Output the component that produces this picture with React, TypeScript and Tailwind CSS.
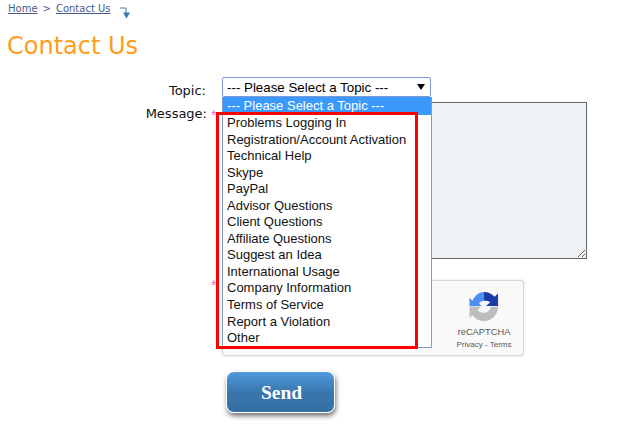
import React from 'react';

const topics = [
  'Problems Logging In',
  'Registration/Account Activation',
  'Technical Help',
  'Skype',
  'PayPal',
  'Advisor Questions',
  'Client Questions',
  'Affiliate Questions',
  'Suggest an Idea',
  'International Usage',
  'Company Information',
  'Terms of Service',
  'Report a Violation',
  'Other',
];

const RecaptchaLogo = () => (
  <svg width="32" height="31" viewBox="0 0 32 32" className="block">
    {/* blue, top left */}
    <path d="M1 15.5 V7 L4 10 C7 4 11 1 16 1 V10 C13.500 10 11.500 11.500 11 13 L13.500 15.500 Z" fill="#4a90f5" />
    {/* dark blue, top right */}
    <path d="M16 1 C20.500 1 24 3 27 6 L30.500 2.500 V15.500 H18 L22.500 11.500 C21 10.500 19 10 16 10 Z" fill="#1c3aa9" />
    {/* grey, bottom */}
    <path d="M1 16 H13 L9.500 19.500 C11 21.500 13 22.500 16 22.500 C19.500 22.500 22 20 23 16.500 L30.500 16 C30.500 24.500 24 31 16 31 C11 31 7 29 4 25 L1 28 Z" fill="#bdbdbd" />
  </svg>
);

const App = () => {
  return (
    <div className="relative w-[644px] h-[447px] overflow-hidden bg-white text-black font-['Liberation_Sans',Arial,sans-serif]">
      {/* Breadcrumb */}
      <div className="flex items-start pl-2 pt-[2px] h-[24px] font-['DejaVu_Sans',Verdana,sans-serif] text-[10px] leading-[13px] text-[#4a5a8c]">
        <a className="underline">Home</a>
        <span className="mx-[5px]">&gt;</span>
        <a className="underline">Contact Us</a>
        <svg width="12" height="12" viewBox="0 0 12 12" className="ml-[9px] mt-[5px]">
          <path d="M0 1 H6 V7" fill="none" stroke="#3a78b0" strokeWidth="1" />
          <path d="M3 5.5 H10 L6.5 11.5 Z" fill="#3a78b0" />
        </svg>
      </div>

      {/* Title */}
      <h1 className="pl-[7px] mt-[6px] h-[32px] font-['DejaVu_Sans',Verdana,sans-serif] text-[24px] leading-[32px] text-[#ff9c1a]">
        Contact Us
      </h1>

      {/* Form */}
      <div className="mt-[15px] flex flex-col text-[14px]">
        <div className="flex h-[25px]">
          <label className="w-[206px] pt-[3px] text-right font-['DejaVu_Sans',Verdana,sans-serif] text-[13px] leading-[22px] text-[#111]">
            Topic:
          </label>
          <div className="relative ml-[16px] w-[209px] h-[20px] pl-[4px] pr-[5px] flex items-center justify-between bg-white border border-[#7b9ad6] rounded-[2px] text-[13.33px]">
            <span className="pt-[1px]">--- Please Select a Topic ---</span>
            <svg width="8" height="6" viewBox="0 0 8 6">
              <path d="M0 0 H8 L4 6 Z" fill="#000" />
            </svg>
          </div>
        </div>

        <div className="flex h-[178px]">
          <label className="w-[207px] pt-[1px] text-right font-['DejaVu_Sans',Verdana,sans-serif] text-[13px] leading-[22px] text-[#111]">
            Message:
          </label>
          <span className="w-[15px] pl-[4px] text-[#ff5cc8] text-[14px] leading-[26px]">*</span>
          <textarea
            readOnly
            className="w-[365px] h-[157px] bg-[#eef2f5] border border-[#666] outline-none"
          />
        </div>

        <div className="flex h-[91px]">
          <span className="w-[222px] pl-[211px] text-[#ff5cc8] text-[14px] leading-[10px]">*</span>
          <div className="w-[302px] h-[76px] flex justify-end bg-[#f9f9f9] border border-[#d6d6d6] rounded-[3px] shadow-[0_0_3px_rgba(0,0,0,0.12)]">
            <div className="w-[78px] flex flex-col items-center pt-[10px]">
              <RecaptchaLogo />
              <span className="mt-[4px] text-[9.3px] leading-[12px] text-[#555]">reCAPTCHA</span>
              <span className="mt-[1px] text-[8px] leading-[12px] text-[#555]">Privacy - Terms</span>
            </div>
          </div>
        </div>

        <div className="pl-[226px]">
          <button className="w-[109px] h-[42px] pl-[2px] pt-[2px] rounded-[8px] border border-white bg-gradient-to-b from-[#4f9be0] via-[#3a77ad] to-[#346ea3] shadow-[1px_3px_5px_rgba(0,0,0,0.55)] font-['Liberation_Serif',serif] font-bold text-[19.5px] text-white">
            Send
          </button>
        </div>
      </div>

      {/* Open dropdown list */}
      <ul className="absolute left-[222px] top-[97px] w-[210px] h-[251px] bg-white border-x border-b border-[#7b9ad6] text-[13px] leading-[16.55px]">
        <li className="pl-[4px] pt-[1px] bg-[#3b99fc] text-white h-[18px]">--- Please Select a Topic ---</li>
        {topics.map((t) => (
          <li key={t} className="pl-[4px] text-[#111]">{t}</li>
        ))}
      </ul>

      {/* Red highlight box */}
      <div className="absolute left-[216px] top-[112px] w-[202px] h-[237px] border-[3px] border-[#ff0000] pointer-events-none" />
    </div>
  );
};

export default App;
